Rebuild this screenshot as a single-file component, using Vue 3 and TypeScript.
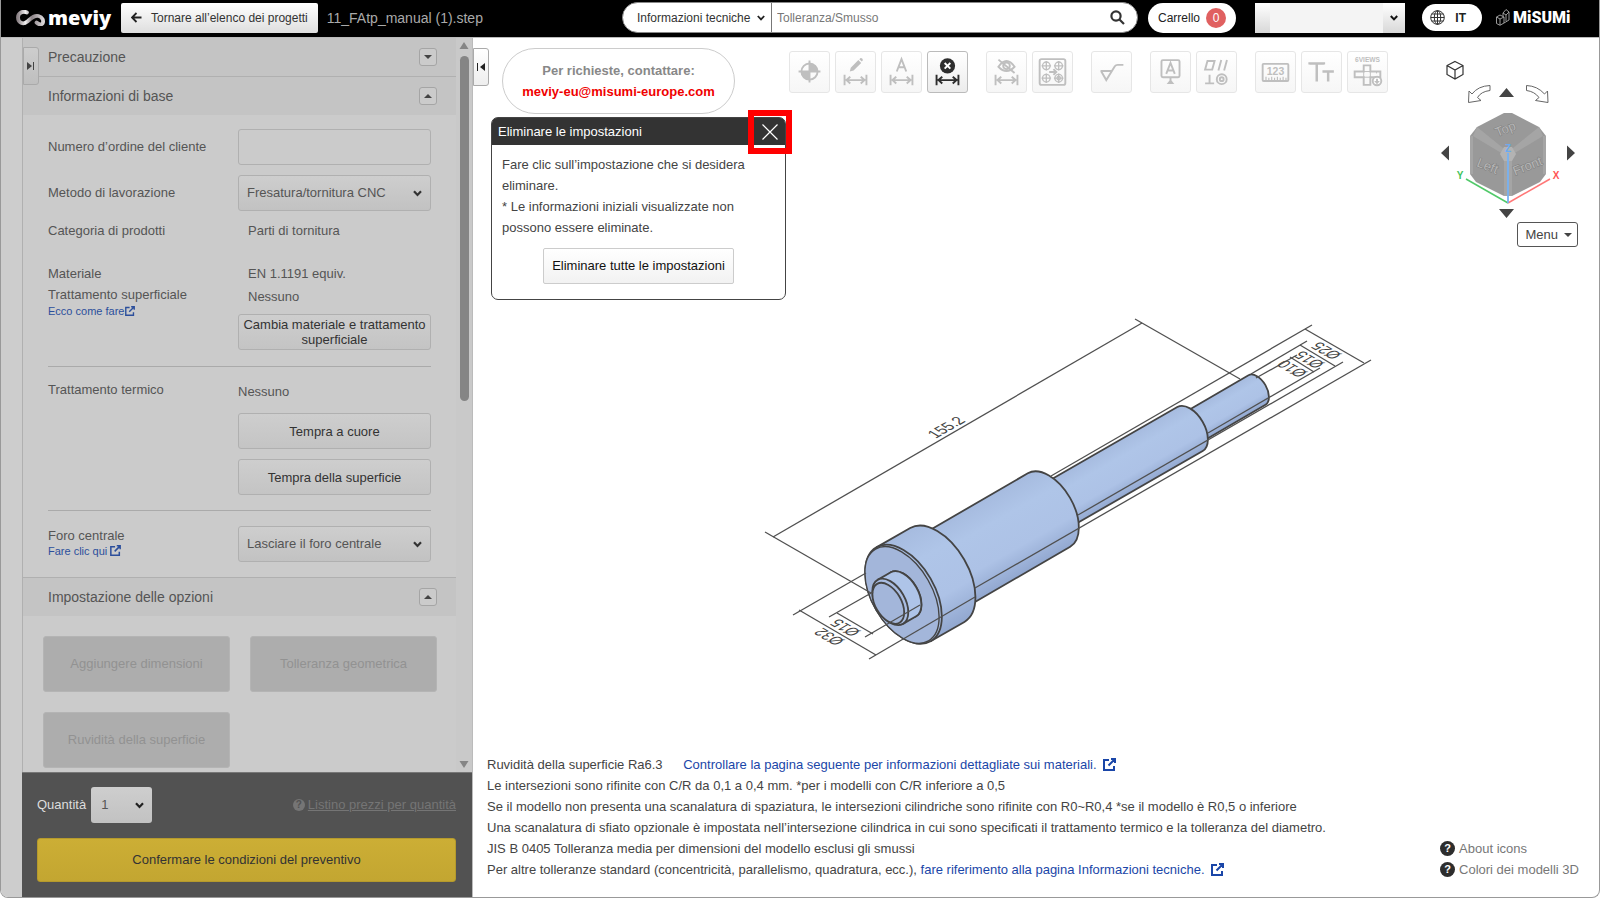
<script setup lang="ts">
import { ref } from 'vue'

const customerOrder = ref('')
const process = ref('Fresatura/tornitura CNC')
const centerHole = ref('Lasciare il foro centrale')
const quantity = ref('1')
const searchScope = ref('Informazioni tecniche')
const searchText = ref('')
const account = ref('')

const options: string[] = ['Aggiungere dimensioni', 'Tolleranza geometrica', 'Ruvidità della superficie']

interface Cylinder {
  x1: number
  y1: number
  x2: number
  y2: number
  a: number
}

// Cylinders of the shaft, far end first; a is the semi-major axis of the end ellipse.
const cylinders: Cylinder[] = [
  { x1: 1190, y1: 429, x2: 1257, y2: 390, a: 17 },
  { x1: 1049, y1: 510, x2: 1190, y2: 429, a: 25.4 },
  { x1: 937, y1: 575, x2: 1049, y2: 510, a: 42.4 },
  { x1: 903.5, y1: 594.3, x2: 937.3, y2: 575, a: 54.2 },
]

function body(c: Cylinder): string {
  const dx = c.a * 0.5
  const dy = c.a * 0.866
  const b = c.a * 0.577
  return `M${c.x1 - dx} ${c.y1 - dy}L${c.x2 - dx} ${c.y2 - dy}A${c.a} ${b} 60 0 1 ${c.x2 + dx} ${c.y2 + dy}L${c.x1 + dx} ${c.y1 + dy}`
}

const stub: Cylinder = { x1: 890.3, y1: 601.9, x2: 903.5, y2: 594.3, a: 25.4 }

const dimensionLines: number[][] = [
  [765, 532, 871, 593], [773, 537, 1142, 323], [1135, 319, 1240, 379],
  [793, 615, 866, 573], [799, 610, 876, 655], [869, 659, 975, 597],
  [829, 617, 873, 592], [837, 613, 873, 634], [865, 637, 920, 605],
  [1312, 325, 1051, 476], [1305, 329, 1364, 363], [1371, 360, 975, 588],
  [1307, 341, 1251, 374], [1300, 345, 1335, 366], [1343, 362, 1078, 515],
  [1297, 355, 1256, 378], [1290, 357, 1314, 372], [1320, 368, 1208, 433],
]
</script>

<template>
  <div class="window">
    <header class="topbar">
      <a class="brand" href="#" aria-label="meviy">
        <svg width="29" height="16" viewBox="0 0 29 16" fill="none">
          <defs>
            <linearGradient id="silver" x1="0" y1="0" x2="1" y2="0">
              <stop offset="0" stop-color="#8d8488" />
              <stop offset=".3" stop-color="#f2f0f1" />
              <stop offset=".55" stop-color="#8b8286" />
              <stop offset="1" stop-color="#d8d4d6" />
            </linearGradient>
          </defs>
          <path d="M11 2.5C7 .6 2 2.6 2 7.6c0 5 5 7.400 9 4.200C15 8.500 18 5 22.500 6c4 1 5.500 5 4 7.500-1.500 1.500-4 .8-6-1" stroke="url(#silver)" stroke-width="3.800" stroke-linecap="round" />
        </svg>
        <span>meviy</span>
      </a>
      <button class="back" type="button">
        <svg width="11" height="11" viewBox="0 0 11 11" fill="none" stroke="#222" stroke-width="1.800"><path d="M10.500 5.500H1.500M5.500 1L1 5.500 5.500 10" /></svg>
        <span>Tornare all’elenco dei progetti</span>
      </button>
      <span class="filename">11_FAtp_manual (1).step</span>
      <form class="search" @submit.prevent>
        <span class="picker scope">
          <select v-model="searchScope" aria-label="Ambito di ricerca"><option>Informazioni tecniche</option></select>
          <svg width="8" height="6" viewBox="0 0 8 6" fill="none" stroke="#222" stroke-width="1.800"><path d="M.8 1L4 4.400 7.200 1" /></svg>
        </span>
        <input v-model="searchText" type="text" placeholder="Tolleranza/Smusso" aria-label="Cerca">
        <button type="submit" aria-label="Cerca">
          <svg width="15" height="15" viewBox="0 0 15 15" fill="none" stroke="#333" stroke-width="2.200"><circle cx="6" cy="6" r="4.600" /><path d="M9.500 9.500L14 14" /></svg>
        </button>
      </form>
      <button class="cart" type="button">Carrello<span class="badge">0</span></button>
      <span class="picker account">
        <select v-model="account" aria-label="Account"><option value=""></option></select>
        <svg width="8" height="6" viewBox="0 0 8 6" fill="none" stroke="#111" stroke-width="2"><path d="M.8 1L4 4.400 7.200 1" /></svg>
      </span>
      <button class="lang" type="button">
        <svg width="15" height="15" viewBox="0 0 15 15" fill="none" stroke="#333"><circle cx="7.500" cy="7.500" r="6.800" /><ellipse cx="7.500" cy="7.500" rx="3.200" ry="6.800" /><path d="M7.500.5v14M.7 7.500h13.600M1.600 4h11.800M1.600 11h11.800" /></svg>
        <span>IT</span>
      </button>
      <a class="misumi" href="#" aria-label="MiSUMi">
        <svg width="14" height="17" viewBox="0 0 14 17" fill="none" stroke="#aaa" stroke-width=".9"><path d="M.5 8L4 6l4 2v6l-4 2.300L.5 14.500zM.5 8L4 10l4-2M4 10v6M7 4l3-3.500L13 3v8l-5 3M7 4l3 2 3-3M10 6v6M7 4v3.400" /></svg>
        <span>MiSUMi</span>
      </a>
    </header>

    <div class="workspace">
      <div class="gutter"></div>
      <aside class="side">
        <button class="tab tab-left" type="button" aria-label="Espandi pannello">
          <svg width="8" height="8" viewBox="0 0 8 8" fill="#444"><path d="M0 0l5 4-5 4zM6 0h1v8H6z" /></svg>
        </button>
        <div class="side-main">
          <div class="side-content">
            <h2 class="section">Precauzione
              <button class="toggle" type="button" aria-label="Apri"><svg width="8" height="4" viewBox="0 0 8 4" fill="#444"><path d="M0 0h8L4 4z" /></svg></button>
            </h2>
            <h2 class="section">Informazioni di base
              <button class="toggle" type="button" aria-label="Chiudi"><svg width="8" height="4" viewBox="0 0 8 4" fill="#444"><path d="M0 4h8L4 0z" /></svg></button>
            </h2>
            <div class="form">
              <div class="row middle">
                <label for="order">Numero d’ordine del cliente</label>
                <input id="order" v-model="customerOrder" class="control" type="text">
              </div>
              <div class="row middle">
                <label for="process">Metodo di lavorazione</label>
                <span class="picker control">
                  <select id="process" v-model="process"><option>Fresatura/tornitura CNC</option></select>
                  <svg width="9" height="7" viewBox="0 0 9 7" fill="none" stroke="#333" stroke-width="2.200"><path d="M1 1.200L4.500 5 8 1.200" /></svg>
                </span>
              </div>
              <div class="row category">
                <span>Categoria di prodotti</span>
                <span class="value">Parti di tornitura</span>
              </div>
              <div class="row material">
                <div class="labels"><span>Materiale</span><span class="second">Trattamento superficiale</span>
                  <a href="#">Ecco come fare<svg class="ext tight" width="10" height="10" viewBox="0 0 13 13"><path d="M6 2H1v10h10V8M8 1h4v4M12 1L5.500 7.500" /></svg></a>
                </div>
                <div class="values"><span class="value">EN 1.1191 equiv.</span><span class="value">Nessuno</span>
                  <button class="control" type="button">Cambia materiale e trattamento superficiale</button>
                </div>
              </div>
              <div class="row block thermal">
                <span>Trattamento termico</span>
                <div class="values"><span>Nessuno</span>
                  <button class="control" type="button">Tempra a cuore</button>
                  <button class="control" type="button">Tempra della superficie</button>
                </div>
              </div>
              <div class="row block hole">
                <div class="labels"><label for="hole">Foro centrale</label>
                  <a href="#">Fare clic qui <svg class="ext" width="11" height="11" viewBox="0 0 13 13"><path d="M6 2H1v10h10V8M8 1h4v4M12 1L5.500 7.500" /></svg></a>
                </div>
                <span class="picker control">
                  <select id="hole" v-model="centerHole"><option>Lasciare il foro centrale</option></select>
                  <svg width="9" height="7" viewBox="0 0 9 7" fill="none" stroke="#333" stroke-width="2.200"><path d="M1 1.200L4.500 5 8 1.200" /></svg>
                </span>
              </div>
            </div>
            <h2 class="section">Impostazione delle opzioni
              <button class="toggle" type="button" aria-label="Chiudi"><svg width="8" height="4" viewBox="0 0 8 4" fill="#444"><path d="M0 4h8L4 0z" /></svg></button>
            </h2>
            <div class="options">
              <button v-for="o in options" :key="o" type="button" disabled>{{ o }}</button>
            </div>
          </div>
          <div class="scrollbar">
            <svg width="10" height="8" viewBox="0 0 10 8" fill="#858585"><path d="M5 0l4.500 7h-9z" /></svg>
            <div class="track"><div class="thumb"></div></div>
            <svg width="10" height="8" viewBox="0 0 10 8" fill="#858585"><path d="M5 8L.5 1h9z" /></svg>
          </div>
        </div>
        <div class="order">
          <div class="order-row">
            <label for="qty">Quantità</label>
            <span class="picker qty">
              <select id="qty" v-model="quantity"><option>1</option></select>
              <svg width="9" height="7" viewBox="0 0 9 7" fill="none" stroke="#222" stroke-width="2.200"><path d="M1 1.200L4.500 5 8 1.200" /></svg>
            </span>
            <a class="prices" href="#"><span class="help">?</span><u>Listino prezzi per quantità</u></a>
          </div>
          <button class="confirm" type="button">Confermare le condizioni del preventivo</button>
        </div>
      </aside>

      <main class="viewer">
        <svg class="model" viewBox="473 38 1126 859" fill="none">
          <defs>
            <linearGradient id="g0" gradientUnits="userSpaceOnUse" x1="1215" y1="395" x2="1232" y2="424"><stop offset="0" stop-color="#a6bbdf" /><stop offset=".3" stop-color="#afc5e8" /><stop offset=".7" stop-color="#adc2e6" /><stop offset="1" stop-color="#92a8d0" /></linearGradient>
            <linearGradient id="g1" gradientUnits="userSpaceOnUse" x1="1107" y1="447" x2="1133" y2="492"><stop offset="0" stop-color="#a6bbdf" /><stop offset=".3" stop-color="#afc5e8" /><stop offset=".7" stop-color="#adc2e6" /><stop offset="1" stop-color="#92a8d0" /></linearGradient>
            <linearGradient id="g2" gradientUnits="userSpaceOnUse" x1="972" y1="505" x2="1014" y2="579"><stop offset="0" stop-color="#a6bbdf" /><stop offset=".3" stop-color="#afc5e8" /><stop offset=".7" stop-color="#adc2e6" /><stop offset="1" stop-color="#92a8d0" /></linearGradient>
            <linearGradient id="g3" gradientUnits="userSpaceOnUse" x1="893" y1="537" x2="947" y2="631"><stop offset="0" stop-color="#a6bbdf" /><stop offset=".3" stop-color="#afc5e8" /><stop offset=".7" stop-color="#adc2e6" /><stop offset="1" stop-color="#92a8d0" /></linearGradient>
          </defs>
          <g stroke="#444" stroke-width="1.800">
            <path v-for="(c, i) in cylinders" :key="i" :d="body(c)" :fill="`url(#g${i})`" />
            <ellipse cx="903.500" cy="594.300" rx="54.200" ry="31.300" transform="rotate(60 903.500 594.300)" fill="#aabfe3" />
            <ellipse cx="902" cy="595" rx="53" ry="30" transform="rotate(60 902 595)" fill="#a3b6da" stroke-width="1.400" />
            <ellipse cx="903.500" cy="594.300" rx="25.400" ry="14.700" transform="rotate(60 903.500 594.300)" fill="#aec4e8" />
            <path :d="body(stub)" fill="#aec4e8" />
            <ellipse cx="890.300" cy="601.900" rx="25.400" ry="14.700" transform="rotate(60 890.300 601.900)" fill="#a9bde2" />
            <ellipse cx="888.300" cy="603.300" rx="22.400" ry="13" transform="rotate(60 888.300 603.300)" fill="#a3b6da" />
          </g>
          <g stroke="#505050" stroke-width="1.300">
            <line v-for="(l, i) in dimensionLines" :key="i" :x1="l[0]" :y1="l[1]" :x2="l[2]" :y2="l[3]" />
          </g>
          <g class="dims">
            <text transform="translate(951 430) rotate(-30) skewX(30)">155.2</text>
            <text transform="translate(1331 348) rotate(210) skewX(-30)">Ø25</text>
            <text transform="translate(1314 357) rotate(210) skewX(-30)">Ø15</text>
            <text transform="translate(1297 366) rotate(210) skewX(-30)">Ø10</text>
            <text transform="translate(850 625) rotate(210) skewX(-30)">Ø15</text>
            <text transform="translate(834 634) rotate(210) skewX(-30)">Ø32</text>
          </g>
        </svg>

        <button class="tab tab-right" type="button" aria-label="Comprimi pannello">
          <svg width="8" height="8" viewBox="0 0 8 8" fill="#222"><path d="M8 0L3 4l5 4zM0 0h1v8H0z" /></svg>
        </button>

        <div class="viewer-top">
          <p class="contact">Per richieste, contattare:<a href="#">meviy-eu@misumi-europe.com</a></p>
          <div class="toolbar">
            <div class="group">
              <button type="button" aria-label="Origine"><svg viewBox="0 0 41 42"><circle cx="20.500" cy="20.500" r="8.500" fill="none" /><path d="M20.500 9v23M9 20.500h23" /><path class="solid" d="M20.500 20.500V12a8.500 8.500 0 0 1 8.500 8.500zM20.500 20.500V29a8.500 8.500 0 0 1-8.500-8.500z" /></svg></button>
              <button type="button" aria-label="Modifica quota"><svg viewBox="0 0 41 42"><path class="solid" d="M14.500 20.500l1-4L23.500 8.500l3 3-8 8zM24.500 7.500l1-1q1-.5 2 .4t.6 2.100l-1 1z" /><path d="M9 24v11M32 24v11M11 29.500h19M15 26l-4 3.500 4 3.500M26 26l4 3.500-4 3.500" /></svg></button>
              <button type="button" aria-label="Testo quota"><svg viewBox="0 0 41 42"><path d="M15.500 20.500l5-13 5 13M17.300 16h6.400M9 24v11M32 24v11M11 29.500h19M15 26l-4 3.500 4 3.500M26 26l4 3.500-4 3.500" /></svg></button>
              <button class="active" type="button" aria-label="Eliminare le impostazioni"><svg viewBox="0 0 41 42"><circle class="solid" cx="20.500" cy="14.500" r="8" /><path class="white" d="M17.500 11.500l6 6M23.500 11.500l-6 6" /><path d="M9 24v11M32 24v11M11 29.500h19M15 26l-4 3.500 4 3.500M26 26l4 3.500-4 3.500" /></svg></button>
            </div>
            <div class="group">
              <button type="button" aria-label="Nascondi quote"><svg viewBox="0 0 41 42"><path d="M12 15.500q8.500-12 17 0-8.500 9-17 0z" /><circle cx="20.500" cy="14.500" r="3.500" /><path d="M12 8l17 14M9 24v11M32 24v11M11 29.500h19M15 26l-4 3.500 4 3.500M26 26l4 3.500-4 3.500" /></svg></button>
              <button type="button" aria-label="Gruppo fori"><svg viewBox="0 0 41 42"><rect x="7" y="7.500" width="27" height="27" rx="2" /><g stroke-width="1.400"><circle cx="14" cy="14.500" r="4" /><circle cx="27" cy="14.500" r="4" /><circle cx="14" cy="27.500" r="4" /><circle cx="27" cy="27.500" r="4" /><circle cx="27" cy="27.500" r="1.800" /><path d="M9 14.500h10M14 9.500v10M22 14.500h10M27 9.500v10M9 27.500h10M14 22.500v10M22 27.500h10M27 22.500v10" /></g><path d="M17 21h7M21.500 18l3 3-3 3" /></svg></button>
            </div>
            <div class="group">
              <button type="button" aria-label="Rugosità"><svg viewBox="0 0 41 42"><path d="M9 20h11.500M9.500 20l5.500 9.500L24 15q1-1.500 3-1.500h6" /></svg></button>
            </div>
            <div class="group">
              <button type="button" aria-label="Riferimento"><svg viewBox="0 0 41 42"><rect x="11" y="8.500" width="19" height="18" rx="1.500" /><path d="M16 23l4.500-11.500L25 23M17.500 19.500h6M20.500 27v3" /><path class="solid" d="M20.500 28.500l4 5h-8z" /></svg></button>
              <button type="button" aria-label="Tolleranza geometrica"><svg viewBox="0 0 41 42"><path d="M8.500 18.500l2.500-9h7.500L16 18.500zM22.500 19.500l3-11M28.500 19.500l3-11M8.500 33h9.500M13.200 24v9" /><circle cx="26" cy="28.500" r="5.200" /><circle cx="26" cy="28.500" r="2" /></svg></button>
            </div>
            <div class="group">
              <button type="button" aria-label="Misura"><svg viewBox="0 0 41 42"><rect x="7" y="12.500" width="27" height="18" rx="1" /><path stroke-width="1.200" d="M10.500 26v4M13.500 27v3M16.500 26v4M19.500 27v3M22.500 26v4M25.500 27v3M28.500 26v4M31.500 27v3" /><text x="20.500" y="24" font-size="11">123</text></svg></button>
              <button type="button" aria-label="Dimensione testo"><svg viewBox="0 0 41 42"><path stroke-width="2.600" d="M8 13v-1h15v1M15.500 12v19M21.500 20.500h12M27.500 20.500V31" /></svg></button>
              <button type="button" aria-label="6 viste"><svg viewBox="0 0 41 42"><text x="20.500" y="11" font-size="7">6VIEWS</text><path d="M16.500 14h7v6.500h10.500v6h-10.500v8h-7v-8H7v-6h9.500z" /><path stroke-width="1" d="M16.500 20.500h7v6h-7zM30 20.500v2" /><circle class="paper" cx="30.500" cy="30.500" r="4.500" /><path class="solid" d="M29.500 28h2v2.500h2l-3 3.500-3-3.500h2z" /></svg></button>
            </div>
          </div>
          <div class="viewcube">
            <svg class="cube-art" width="136" height="160" viewBox="1440 60 136 160" fill="none">
              <path d="M1455 61.500l8 4v9l-8 4.500-8-4.500v-9zM1447 65.500l8 4.500 8-4.500M1455 70v9" stroke="#333" stroke-width="1.200" />
              <path d="M1490 85.500v5q-9 1-12.500 7l3.500 3-12.500 2 .5-11.500 3 3q6-8 18-8.500zM1526.500 85.500v5q8 1 12.500 7l-3.500 3 12.500 2-.5-11.500-3 3q-7-8-18-8.500z" stroke="#666" />
              <g fill="#444"><path d="M1506.500 88l7.500 9h-15zM1506.500 218l7.500-9h-15zM1441 153l8-7.500v15zM1575 153l-8-7.500v15z" /></g>
              <path d="M1504 113h8l27 14 7 9v38l-6 8-28 14h-8l-28-14-6-8v-38l7-9z" fill="#999" />
              <path d="M1477 127l-4 9 30 18h10l30-18-4-9-26 21h-10z" fill="#a5a5a5" />
              <path d="M1504 157h8v39h-8zM1546 136l-3 0v38l3 0zM1470 136h3v38h-3z" fill="#a5a5a5" />
              <path d="M1504 147h8l4 7-4 7h-8l-4-7z" fill="#b3b3b3" />
              <g class="faces">
                <text transform="translate(1507 133) rotate(-22)">Top</text>
                <text transform="translate(1486 170) rotate(22)">Left</text>
                <text transform="translate(1529 170) rotate(-22)">Front</text>
              </g>
              <path d="M1508 203l-42-24" stroke="#51c969" stroke-width="1.500" /><path d="M1508 203l42-24" stroke="#f77" stroke-width="1.500" /><path d="M1508 203v-50" stroke="#77b2f2" stroke-width="1.800" />
              <g class="axes"><text x="1460" y="179" fill="#3fc35a">Y</text><text x="1556" y="179" fill="#f55">X</text><text x="1508" y="152" fill="#6babf0">Z</text></g>
            </svg>
            <button class="menu" type="button">Menu<svg width="8" height="4" viewBox="0 0 8 4" fill="#444"><path d="M0 0h8L4 4z" /></svg></button>
          </div>
        </div>

        <section class="dialog" aria-labelledby="dialog-title">
          <header><h3 id="dialog-title">Eliminare le impostazioni</h3>
            <button type="button" aria-label="Chiudi"><svg width="16" height="16" viewBox="0 0 16 16" fill="none" stroke="#fff" stroke-width="1.200"><path d="M.5.5l15 15M15.500.5l-15 15" /></svg></button>
          </header>
          <div class="dialog-body">
            <p>Fare clic sull’impostazione che si desidera eliminare.<br>* Le informazioni iniziali visualizzate non possono essere eliminate.</p>
            <button type="button">Eliminare tutte le impostazioni</button>
          </div>
        </section>

        <footer class="notes">
          <div class="note-lines">
            <p>Ruvidità della superficie Ra6.3 <a class="spaced" href="#">Controllare la pagina seguente per informazioni dettagliate sui materiali.<svg class="ext big" width="13" height="13" viewBox="0 0 13 13"><path d="M6 2H1v10h10V8M8 1h4v4M12 1L5.500 7.500" /></svg></a></p>
            <p>Le intersezioni sono rifinite con C/R da 0,1 a 0,4 mm. *per i modelli con C/R inferiore a 0,5</p>
            <p>Se il modello non presenta una scanalatura di spaziatura, le intersezioni cilindriche sono rifinite con R0~R0,4 *se il modello è R0,5 o inferiore</p>
            <p>Una scanalatura di sfiato opzionale è impostata nell’intersezione cilindrica in cui sono specificati il trattamento termico e la tolleranza del diametro.</p>
            <p>JIS B 0405 Tolleranza media per dimensioni del modello esclusi gli smussi</p>
            <p>Per altre tolleranze standard (concentricità, parallelismo, quadratura, ecc.), <a href="#">fare riferimento alla pagina Informazioni tecniche.<svg class="ext big" width="13" height="13" viewBox="0 0 13 13"><path d="M6 2H1v10h10V8M8 1h4v4M12 1L5.500 7.500" /></svg></a></p>
          </div>
          <nav class="help-links">
            <a href="#"><span class="help">?</span>About icons</a>
            <a href="#"><span class="help">?</span>Colori dei modelli 3D</a>
          </nav>
        </footer>
      </main>
    </div>
  </div>
</template>

<style>
body { margin: 0; background: #fff; }
</style>

<style scoped>
* { box-sizing: border-box; }
.window { display: flex; flex-direction: column; height: calc(100vh - 2px); min-height: 880px; border: 1px solid #999; border-top: 0; border-radius: 0 0 8px 8px; overflow: hidden; background: #fff; color: #555; font: 13px/16px "Liberation Sans", Arial, sans-serif; }
button, input, select { font: inherit; color: inherit; margin: 0; }
button { cursor: pointer; }
p, h2, h3 { margin: 0; font-weight: 400; }
a { color: #1a46a8; text-decoration: none; }

.picker { display: grid; align-items: center; }
.picker select { grid-area: 1 / 1; width: 100%; height: 100%; border: 0; background: none; appearance: none; outline: none; }
.picker svg { grid-area: 1 / 1; justify-self: end; pointer-events: none; }

.topbar { flex: none; display: flex; align-items: center; height: 38px; padding: 0 29px 2px 15px; background: #000; border-bottom: 1px solid #bbb; font-size: 12px; }
.brand { display: flex; align-items: center; gap: 3px; width: 105px; color: #fff; font: 800 20px/24px "Open Sans", sans-serif; }
.back { display: flex; align-items: center; gap: 9px; height: 30px; padding: 0 10px; border: 0; border-radius: 2px; background: linear-gradient(#fff, #dedede); color: #333; white-space: nowrap; }
.filename { flex: 1; margin-left: 9px; color: #aaa; font-size: 14px; }
.search { display: flex; align-items: center; width: 516px; height: 31px; border: 1px solid #888; border-radius: 16px; background: #fff; overflow: hidden; }
.search .scope { width: 149px; height: 100%; padding-right: 6px; border-right: 1px solid #777; color: #333; }
.search .scope select { padding: 0 0 0 14px; }
.search input { flex: 1; border: 0; padding: 0 5px; outline: none; }
.search input::placeholder { color: #777; opacity: 1; }
.search button { display: flex; padding: 0; border: 0; margin-right: 12px; background: none; }
.cart { display: flex; align-items: center; justify-content: space-between; width: 88px; height: 30px; margin-left: 10px; padding: 0 10px; border: 0; border-radius: 15px; background: #fff; color: #222; }
.badge { width: 20px; height: 20px; border-radius: 10px; background: #e06060; color: #fff; line-height: 20px; }
.account { width: 150px; height: 30px; margin-left: 19px; padding-right: 7px; background: linear-gradient(90deg, transparent 15px, #f4f4f4 15px 128px, transparent 128px), linear-gradient(#fff, #d8d8d8); }
.lang { display: flex; align-items: center; justify-content: space-between; width: 60px; height: 27px; margin-left: 17px; padding: 0 16px 0 8px; border: 0; border-radius: 14px; background: #fff; color: #222; font-weight: 700; }
.misumi { display: flex; align-items: center; gap: 3px; width: 74px; margin-left: 14px; color: #fff; font: 900 16px/20px Roboto, sans-serif; }
.misumi svg { flex: none; }

.workspace { flex: 1; display: flex; min-height: 0; }
.gutter { width: 21px; flex: none; background: #cdcdcd; }
.side { position: relative; display: flex; flex-direction: column; width: 451px; flex: none; border-left: 1px solid #b0b0b0; border-right: 1px solid #bbb; background: #cbcbcb; }
.tab { position: absolute; display: flex; align-items: center; justify-content: center; width: 16px; height: 38px; padding: 0; border: 1px solid #aaa; border-radius: 0 3px 3px 0; }
.tab-left { top: 9px; left: 0; z-index: 1; background: linear-gradient(#cdcdcd, #bfbfbf); }
.tab-right { top: 10px; left: 0; background: linear-gradient(#fff, #eee); }
.side-main { flex: 1; display: flex; min-height: 0; }
.side-content { flex: 1; overflow: hidden; }
.section { display: flex; align-items: center; justify-content: space-between; height: 39px; padding: 0 19px 0 25px; border-top: 1px solid #b0b0b0; background: #c4c4c4; font-size: 14px; }
.section:first-child { height: 38px; border-top: 0; }
.toggle { display: flex; align-items: center; justify-content: center; width: 18px; height: 18px; padding: 0; border: 1px solid #a5a5a5; border-radius: 3px; background: #cbcbcb; }
.form { padding: 14px 25px 15px; }
.row { display: grid; grid-template-columns: 190px minmax(0, 1fr); margin-bottom: 10px; }
.middle { align-items: center; }
.category { padding-top: 2px; }
.value { padding-left: 10px; }
.control { width: 100%; height: 36px; border: 1px solid #b0b0b0; border-radius: 3px; background: #cbcbcb; }
.picker.control { padding-right: 8px; background: linear-gradient(#cecece, #c2c2c2); }
.picker.control select { padding: 0 8px; }
button.control { padding: 0 2px; background: linear-gradient(#cecece, #c4c4c4); color: #333; line-height: 15px; }
.material { margin: 27px 0 16px; }
.labels, .values { display: flex; flex-direction: column; }
.second { margin: 5px 0 1px; }
.labels a { font-size: 11px; line-height: 15px; color: #2c4f9c; }
.ext { fill: none; stroke: currentColor; stroke-width: 1.800; vertical-align: -1px; }
.tight { margin-left: 1px; }
.values > * + * { margin-top: 7px; }
.values > button { margin-top: 9px; }
.block { margin-bottom: 15px; padding-top: 15px; border-top: 1px solid #aaa; }
.thermal .values { padding-top: 2px; }
.thermal .values button { margin-top: 13px; }
.thermal .values button + button { margin-top: 10px; }
.hole { margin-bottom: 0; }
.hole .labels { padding-top: 2px; }
.options { display: grid; grid-template-columns: 1fr 1fr; gap: 20px; padding: 20px 19px 20px 20px; }
.options button { height: 56px; border: 1px solid #b4b4b4; border-radius: 3px; background: #adadad; color: #929292; }
.scrollbar { display: flex; flex-direction: column; align-items: center; width: 16px; padding: 4px 0; background: #c9c9c9; }
.track { flex: 1; width: 9px; padding-top: 6px; }
.thumb { height: 49%; border-radius: 5px; background: #858585; }
.order { padding: 14px 16px 15px 15px; background: #525252; border-top: 1px solid #777; margin-left: -1px; }
.order-row { display: flex; align-items: center; gap: 5px; margin-bottom: 15px; color: #ddd; }
.qty { width: 61px; height: 36px; padding-right: 8px; border-radius: 3px; background: linear-gradient(#cecece, #c2c2c2); color: #555; }
.qty select { padding: 0 10px; }
.prices { display: flex; align-items: center; gap: 3px; margin-left: auto; color: #757575; }
.help { display: inline-flex; align-items: center; justify-content: center; width: 12px; height: 12px; border-radius: 50%; background: #757575; color: #525252; font-size: 10px; font-weight: 700; }
.confirm { width: 100%; height: 44px; border: 1px solid #b59a2c; border-radius: 3px; background: linear-gradient(#ccae35, #c3a631); color: #333; }

.viewer { position: relative; flex: 1; display: flex; flex-direction: column; justify-content: space-between; min-width: 0; }
.model { position: absolute; inset: 0; width: 100%; height: 100%; pointer-events: none; }
.dims { fill: #444; font-size: 14px; text-anchor: middle; }
.viewer-top { position: relative; display: flex; align-items: flex-start; padding: 10px 21px 0 29px; }
.contact { width: 233px; height: 66px; padding: 11px 0; border: 1px solid #ccc; border-radius: 33px; color: #888; font-weight: 700; line-height: 21px; text-align: center; }
.contact a { display: block; color: #f00000; }
.toolbar { display: flex; gap: 18px; margin: 3px 0 0 54px; }
.group { display: flex; gap: 5px; }
.group button { width: 41px; height: 42px; padding: 0; border: 1px solid #e6e6e6; border-radius: 3px; background: linear-gradient(#fff, #f6f6f6); color: #bfbfbf; }
.group button svg { display: block; width: 39px; height: 40px; fill: none; stroke: currentColor; stroke-width: 2; }
.group .solid, .group text { fill: currentColor; stroke: none; }
.group .white { stroke: #fff; stroke-width: 2; }
.group .paper { fill: #fff; }
.group text { font-weight: 700; text-anchor: middle; }
.group .active { border-color: #bbb; background: linear-gradient(#fff, #ececec); color: #2d2d2d; }
.viewcube { display: flex; flex-direction: column; align-items: flex-end; gap: 2px; margin: 12px 0 0 auto; }
.cube-art { margin-right: 2px; }
.faces { font-size: 13px; text-anchor: middle; fill: #b5b5b5; stroke: #808080; stroke-width: 1; paint-order: stroke; }
.axes { font-size: 10px; font-weight: 700; text-anchor: middle; }
.menu { display: flex; align-items: center; gap: 6px; height: 25px; padding: 0 5px 0 7px; border: 1px solid #555; border-radius: 3px; background: #fff; color: #444; }

.dialog { position: absolute; top: 79px; left: 18px; width: 295px; border: 1px solid #444; border-radius: 7px; background: #fff; color: #444; }
.dialog header { display: flex; align-items: center; justify-content: space-between; height: 27px; padding-left: 6px; border-radius: 5px 5px 0 0; background: #333; color: #fff; }
.dialog h3 { font-size: 13px; }
.dialog header button { display: flex; align-items: center; justify-content: center; width: 44px; height: 44px; margin-right: -7px; padding: 0; border: 6px solid #f00; background: none; }
.dialog-body { padding: 9px 10px 15px; text-align: center; }
.dialog-body p { line-height: 21px; text-align: left; }
.dialog-body button { height: 36px; margin-top: 10px; padding: 0 8px; border: 1px solid #ccc; border-radius: 2px; background: linear-gradient(#fff, #f2f2f2); color: #111; }

.notes { position: relative; display: flex; justify-content: space-between; align-items: flex-end; padding: 0 20px 17px 14px; color: #444; line-height: 21px; }
.spaced { margin-left: 17px; }
.big { margin-left: 6px; stroke-width: 2; vertical-align: -2px; }
.help-links { display: flex; flex-direction: column; }
.help-links a { display: flex; align-items: center; gap: 4px; color: #777; }
.help-links .help { width: 15px; height: 15px; background: #2d2d2d; color: #fff; font-size: 11px; }
</style>
